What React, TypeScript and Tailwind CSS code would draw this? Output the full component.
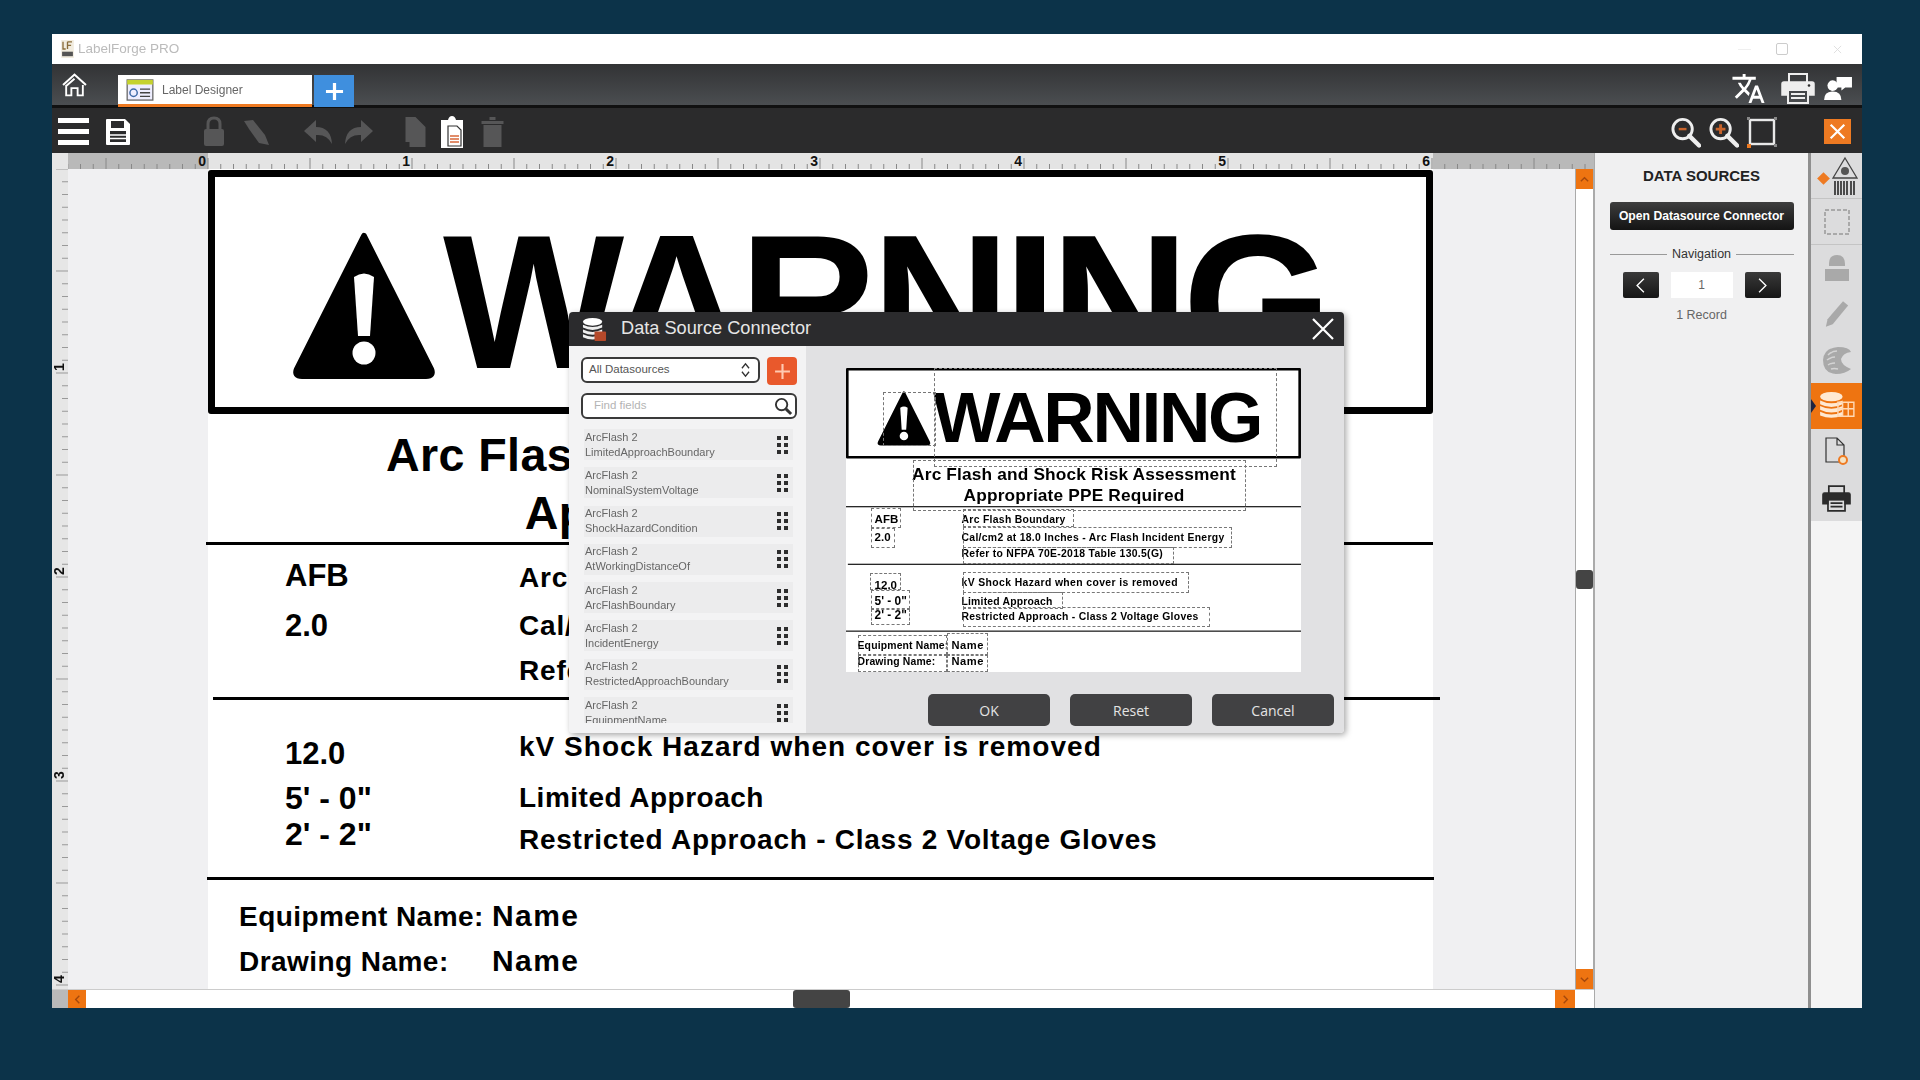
import { MdTranslate } from "react-icons/md";

const SANS = "font-['Liberation_Sans',Arial,sans-serif]";

function Triangle({ className }: { className: string }) {
  return (
    <svg viewBox="0 0 146 150" className={className}>
      <path d="M73 6 L140 139 Q143 146 135 146 L11 146 Q3 146 6 139 Z" fill="#000" stroke="#000" strokeWidth="6" strokeLinejoin="round" />
      <path d="M63 47 Q73 40 83 47 L79 106 L67 106 Z" fill="#fff" />
      <circle cx="73" cy="123" r="11.5" fill="#fff" />
    </svg>
  );
}

function Label() {
  const big = "absolute whitespace-nowrap leading-none font-bold text-black";
  return (
    <div className={`relative w-[1232px] h-[830px] ${SANS}`}>
      <div className="absolute left-0 top-0 w-[1225px] h-[244px] border-[7px] border-black rounded-[3px]" />
      <Triangle className="absolute left-[83px] top-[60px] w-[146px] h-[150px]" />
      <div className={`${big} left-[235px] top-[36px] text-[192px] tracking-[-6.5px]`}>WARNING</div>
      <div className={`${big} left-0 top-[262px] w-[1228px] text-center text-[46.6px] tracking-[0.4px]`}>Arc Flash and Shock Risk Assessment</div>
      <div className={`${big} left-0 top-[320px] w-[1228px] text-center text-[46.6px] tracking-[0.4px]`}>Appropriate PPE Required</div>
      <div className="absolute left-[-2px] top-[372px] w-[1227px] h-[3px] bg-black" />
      <div className="absolute left-[5px] top-[527px] w-[1227px] h-[3px] bg-black" />
      <div className="absolute left-[-1px] top-[707px] w-[1227px] h-[3px] bg-black" />

      <div className={`${big} left-[77px] top-[390px] text-[31px]`}>AFB</div>
      <div className={`${big} left-[77px] top-[440px] text-[31px]`}>2.0</div>
      <div className={`${big} left-[311px] top-[394px] text-[28px] tracking-[0.8px]`}>Arc Flash Boundary</div>
      <div className={`${big} left-[311px] top-[442px] text-[28px] tracking-[0.8px]`}>Cal/cm2 at 18.0 Inches - Arc Flash Incident Energy</div>
      <div className={`${big} left-[311px] top-[487px] text-[28px] tracking-[0.8px]`}>Refer to NFPA 70E-2018 Table 130.5(G)</div>

      <div className={`${big} left-[77px] top-[568px] text-[31px]`}>12.0</div>
      <div className={`${big} left-[77px] top-[612px] text-[32px]`}>5' - 0"</div>
      <div className={`${big} left-[77px] top-[648px] text-[32px]`}>2' - 2"</div>
      <div className={`${big} left-[311px] top-[563px] text-[28px] tracking-[1.03px]`}>kV Shock Hazard when cover is removed</div>
      <div className={`${big} left-[311px] top-[614px] text-[28px] tracking-[0.5px]`}>Limited Approach</div>
      <div className={`${big} left-[311px] top-[656px] text-[28px] tracking-[0.75px]`}>Restricted Approach - Class 2 Voltage Gloves</div>

      <div className={`${big} left-[31px] top-[733px] text-[28px] tracking-[0.45px]`}>Equipment Name:</div>
      <div className={`${big} left-[284px] top-[731px] text-[30px] tracking-[1.4px]`}>Name</div>
      <div className={`${big} left-[31px] top-[778px] text-[28px] tracking-[0.45px]`}>Drawing Name:</div>
      <div className={`${big} left-[284px] top-[776px] text-[30px] tracking-[1.4px]`}>Name</div>
    </div>
  );
}

const DASHES = [
  "left-[37px] top-[24px] w-[53px] h-[54px]",
  "left-[88px] top-[0px] w-[343px] h-[99px]",
  "left-[67px] top-[92px] w-[333px] h-[51px]",
  "left-[25px] top-[140px] w-[30px] h-[20px]",
  "left-[25px] top-[160px] w-[24px] h-[20px]",
  "left-[117px] top-[141px] w-[111px] h-[18px]",
  "left-[117px] top-[159px] w-[269px] h-[21px]",
  "left-[117px] top-[179px] w-[211px] h-[17px]",
  "left-[24px] top-[205px] w-[31px] h-[17px]",
  "left-[25px] top-[222px] w-[39px] h-[19px]",
  "left-[25px] top-[241px] w-[39px] h-[16px]",
  "left-[117px] top-[204px] w-[226px] h-[21px]",
  "left-[117px] top-[224px] w-[100px] h-[17px]",
  "left-[117px] top-[239px] w-[247px] h-[20px]",
  "left-[12px] top-[267px] w-[89px] h-[20px]",
  "left-[101px] top-[265px] w-[41px] h-[22px]",
  "left-[12px] top-[287px] w-[89px] h-[17px]",
  "left-[101px] top-[287px] w-[41px] h-[17px]",
];

function HRuler() {
  const ticks = Array.from({ length: 121 }, (_, i) => i);
  return (
    <svg width="1526" height="16" className="block">
      <rect width="1526" height="16" fill="#b9b9b9" />
      <rect x="140" width="1225" height="16" fill="#e4e4e4" />
      {ticks.map((i) => {
        const x = 140 + (i - 11) * 12.75;
        const major = (i - 11) % 8 === 0;
        return <line key={i} x1={x} x2={x} y1={major ? 5 : 11} y2="16" stroke="#888" strokeWidth="1" />;
      })}
      {[0, 1, 2, 3, 4, 5, 6].map((n) => (
        <text key={n} x={138 + n * 204} y="13" textAnchor="end" fontSize="14" fontWeight="700" fill="#111" fontFamily="Liberation Sans">{n}</text>
      ))}
    </svg>
  );
}

function VRuler() {
  const ticks = Array.from({ length: 66 }, (_, i) => i);
  return (
    <svg width="16" height="820" className="block">
      <rect width="16" height="820" fill="#e6e6e6" />
      {ticks.map((i) => {
        const y = i * 12.75;
        return <line key={i} x1={i % 8 === 0 ? 4 : 10} x2="16" y1={y} y2={y} stroke="#999" strokeWidth="1" />;
      })}
      {[1, 2, 3, 4].map((n) => {
        const y = n * 204 - 6;
        return <text key={n} x="8" y={y} transform={`rotate(-90 8 ${y})`} textAnchor="middle" dominantBaseline="middle" fontSize="14" fontWeight="700" fill="#111" fontFamily="Liberation Sans">{n}</text>;
      })}
    </svg>
  );
}

function Db({ className }: { className: string }) {
  return (
    <svg viewBox="0 0 26 26" className={className}>
      <ellipse cx="11" cy="5" rx="10" ry="4" fill="#fff" />
      <path d="M1 8 Q11 13 21 8 V11 Q11 16 1 11 Z" fill="#eee" />
      <path d="M1 13 Q11 18 21 13 V16 Q11 21 1 16 Z" fill="#eee" />
      <path d="M1 18 Q11 23 21 18 V21 Q11 26 1 21 Z" fill="#eee" />
      <rect x="13" y="15" width="12" height="10" rx="1" fill="#b5492a" />
    </svg>
  );
}

function Printer({ className, stroke, fill }: { className: string; stroke: string; fill: string }) {
  return (
    <svg viewBox="0 0 34 32" className={className}>
      <path d="M8 10 V2 H26 V10" fill="none" stroke={stroke} strokeWidth="2" />
      <path d="M3 10 H31 Q33 10 33 12 V23 H27 V18 H7 V23 H1 V12 Q1 10 3 10 Z" fill={fill} stroke={stroke} strokeWidth="1.5" />
      <path d="M7 18 H27 V31 H7 Z M10 22 H24 M10 26 H24" fill="none" stroke={stroke} strokeWidth="2" />
      <circle cx="28" cy="13.5" r="1.3" fill="#2b2b2b" />
    </svg>
  );
}

const FIELDS = [
  "LimitedApproachBoundary",
  "NominalSystemVoltage",
  "ShockHazardCondition",
  "AtWorkingDistanceOf",
  "ArcFlashBoundary",
  "IncidentEnergy",
  "RestrictedApproachBoundary",
  "EquipmentName",
];

function Dots() {
  return (
    <div className="grid grid-cols-2 gap-x-[3px] gap-y-[3px] w-[11px]">
      {[0, 1, 2, 3, 4, 5].map((i) => (
        <div key={i} className="w-[4px] h-[4px] bg-[#2d2d2d]" />
      ))}
    </div>
  );
}

function Dialog() {
  return (
    <div className={`absolute left-[501px] top-[143px] w-[775px] h-[421px] flex flex-col rounded-[4px] overflow-hidden shadow-[2px_2px_6px_rgba(0,0,0,0.35)] ${SANS}`}>
      <div className="h-[34px] bg-[#2b2b2d] flex items-center pl-[13px] pr-[9px] shrink-0">
        <Db className="w-[25px] h-[25px]" />
        <span className="ml-[14px] text-[18.2px] text-[#e6e6e6]">Data Source Connector</span>
        <svg viewBox="0 0 24 24" className="ml-auto w-[24px] h-[24px]">
          <path d="M2 2 L22 22 M22 2 L2 22" stroke="#fff" strokeWidth="2.2" />
        </svg>
      </div>
      <div className="flex-1 flex min-h-0">
        <div className="w-[237px] bg-[#f3f3f4] pl-[12px] pr-[9px] pt-[11px] flex flex-col">
          <div className="flex gap-[7px] h-[28px]">
            <div className="w-[180px] h-[26px] bg-white border-2 border-[#3a3a3a] rounded-[6px] flex items-center pl-[6px] pr-[7px]">
              <span className="text-[11.5px] text-[#555]">All Datasources</span>
              <svg viewBox="0 0 12 18" className="ml-auto w-[11px] h-[16px]">
                <path d="M2 7 L6 2 L10 7 M2 11 L6 16 L10 11" fill="none" stroke="#333" strokeWidth="1.5" />
              </svg>
            </div>
            <div className="w-[30px] h-[28px] bg-[#e9592c] rounded-[4px] flex items-center justify-center">
              <svg viewBox="0 0 16 16" className="w-[17px] h-[17px]"><path d="M8 1 V15 M1 8 H15" stroke="#ffc9b0" strokeWidth="2" /></svg>
            </div>
          </div>
          <div className="mt-[8px] w-[216px] h-[26px] bg-white border-2 border-[#3a3a3a] rounded-[6px] flex items-center pl-[11px] pr-[2px] shrink-0">
            <span className="text-[11.5px] text-[#b4b4b4]">Find fields</span>
            <svg viewBox="0 0 20 20" className="ml-auto w-[19px] h-[19px]">
              <circle cx="8" cy="8" r="6" fill="none" stroke="#333" strokeWidth="2" />
              <path d="M12.5 12.5 L18 18" stroke="#333" strokeWidth="3" />
            </svg>
          </div>
          <div className="mt-[10px] w-[216px] pl-[3px] h-[294px] overflow-hidden flex flex-col gap-[7.3px]">
            {FIELDS.map((f) => (
              <div key={f} className="w-[209px] h-[31px] shrink-0 bg-[#ececed] flex items-center pl-[1px] pr-[5px]">
                <div className="leading-[15px] text-[11px] text-[#666] blur-[0.3px]">
                  <div>ArcFlash 2</div>
                  <div>{f}</div>
                </div>
                <div className="ml-auto"><Dots /></div>
              </div>
            ))}
          </div>
        </div>
        <div className="flex-1 bg-[#e1e1e3] pl-[40px] pt-[22px] flex flex-col">
          <div className="relative w-[455px] h-[304px] bg-white overflow-hidden shrink-0">
            <div className="absolute left-0 top-0 origin-top-left scale-[0.3714]"><Label /></div>
            {DASHES.map((c) => (
              <div key={c} className={`absolute border border-dashed border-[#777] ${c}`} />
            ))}
          </div>
          <div className="flex gap-[20px] ml-[82px] mt-[22px] font-['Open_Sans',sans-serif]">
            {["OK", "Reset", "Cancel"].map((b) => (
              <div key={b} className="w-[122px] h-[32px] bg-[#414143] rounded-[5px] flex items-center justify-center text-[14px] text-[#e4e4e4]">{b}</div>
            ))}
          </div>
        </div>
      </div>
    </div>
  );
}

function TitleBar() {
  return (
    <div className="h-[30px] bg-white flex items-center pl-[9px] pr-[20px] shrink-0">
      <svg viewBox="0 0 14 20" className="w-[13px] h-[18px]">
        <rect width="14" height="20" fill="#f1ecdf" />
        <path d="M2 2 V10 H5 M7 2 V10 M7 2 H12 M7 6 H11" stroke="#8a6d3b" strokeWidth="1.5" fill="none" />
        <rect x="1" y="13" width="12" height="5" fill="#555" />
      </svg>
      <span className="ml-[4px] text-[13.5px] text-[#bbb] blur-[0.4px]">LabelForge PRO</span>
      <div className="ml-auto w-[13px] h-px bg-[#efefef]" />
      <div className="ml-[25px] w-[12px] h-[12px] border border-[#ccc] rounded-[2px]" />
      <svg viewBox="0 0 10 10" className="ml-[45px] w-[9px] h-[9px]"><path d="M1 1 L9 9 M9 1 L1 9" stroke="#ddd" /></svg>
    </div>
  );
}

function TabBar() {
  return (
    <div className="h-[44px] bg-gradient-to-b from-[#323335] to-[#4b4e51] border-b-[3px] border-[#111] flex items-end shrink-0 relative">
      <svg viewBox="0 0 24 24" className="absolute left-[10px] top-[8px] w-[25px] h-[26px]">
        <path d="M1 12 L12 2 L23 12" fill="none" stroke="#fff" strokeWidth="2" />
        <path d="M4 12 V22 H9 V15 H15 V22 H20 V12 M12 6 L4 13" fill="none" stroke="#fff" strokeWidth="1.8" />
      </svg>
      <div className="ml-[66px] w-[194px] h-[32px] bg-white border-b-[3px] border-[#ee7a22] flex items-center pl-[7px] mb-[-2px]">
        <svg viewBox="0 0 30 24" className="w-[30px] h-[22px]">
          <rect x="1" y="1" width="28" height="22" fill="#eef" stroke="#666" strokeWidth="1.4" />
          <rect x="1" y="1" width="28" height="5" fill="#c5d22e" />
          <circle cx="8" cy="15" r="4" fill="none" stroke="#3e6aa8" strokeWidth="1.6" />
          <path d="M15 11 H26 M15 15 H26 M15 19 H26" stroke="#444" strokeWidth="1.5" />
        </svg>
        <span className="ml-[7px] text-[12px] text-[#666]">Label Designer</span>
      </div>
      <div className="ml-[2px] w-[40px] h-[32px] bg-[#3f8fde] flex items-center justify-center mb-[-2px]">
        <svg viewBox="0 0 20 20" className="w-[19px] h-[19px]"><path d="M10 1 V19 M1 10 H19" stroke="#fff" strokeWidth="3.4" /></svg>
      </div>
      <div className="ml-auto self-center flex items-center mr-[9px] mt-[7px]">
        <MdTranslate className="w-[35px] h-[35px] text-white" />
        <Printer className="ml-[15px] w-[34px] h-[32px]" stroke="#eee" fill="#eee" />
        <svg viewBox="0 0 30 26" className="ml-[9px] w-[29px] h-[25px]">
          <path d="M13 1 H29 V12 H22 L18 15 V12 H13 Z" fill="#fff" />
          <circle cx="9" cy="10" r="5.5" fill="#fff" />
          <path d="M0 25 Q0 16 9 16 Q18 16 18 25 Z" fill="#fff" />
        </svg>
      </div>
    </div>
  );
}

function ToolBar() {
  const g = "#565657";
  return (
    <div className="h-[45px] bg-[#2b2b2c] flex items-center pl-[6px] pr-[11px] pt-[2px] shrink-0">
      <div className="w-[31px] flex flex-col gap-[6px]">
        <div className="h-[5px] bg-white" /><div className="h-[5px] bg-white" /><div className="h-[5px] bg-white" />
      </div>
      <svg viewBox="0 0 26 28" className="ml-[16px] w-[26px] h-[28px]">
        <path d="M1 2 Q1 1 2 1 H20 L25 6 V26 Q25 27 24 27 H2 Q1 27 1 26 Z" fill="#fff" />
        <rect x="6" y="3" width="13" height="7" fill="#2b2b2c" />
        <rect x="5" y="13" width="16" height="11" fill="#2b2b2c" />
        <path d="M5 17 H21 M5 20.5 H21" stroke="#fff" strokeWidth="1.5" />
      </svg>
      <svg viewBox="0 0 24 32" className="ml-[71px] w-[24px] h-[32px]">
        <path d="M6 14 V8 Q6 2 12 2 Q18 2 18 8 V14" fill="none" stroke={g} strokeWidth="3" />
        <rect x="2" y="13" width="20" height="17" rx="2" fill={g} />
      </svg>
      <svg viewBox="0 0 30 30" className="ml-[15px] w-[30px] h-[30px]">
        <path d="M3 4 L12 3 L24 18 L28 28 L18 26 L8 12 Z" fill={g} />
      </svg>
      <svg viewBox="0 0 30 26" className="ml-[32px] w-[30px] h-[26px]"><path d="M13 1 L1 12 L13 23 V16 Q24 15 29 25 Q28 8 13 8 Z" fill={g} /></svg>
      <svg viewBox="0 0 30 26" className="ml-[11px] w-[30px] h-[26px]"><path d="M17 1 L29 12 L17 23 V16 Q6 15 1 25 Q2 8 17 8 Z" fill={g} /></svg>
      <svg viewBox="0 0 24 32" className="ml-[29px] w-[25px] h-[32px]"><path d="M2 1 H12 L22 11 V31 H6 V26 H2 Z" fill={g} /></svg>
      <svg viewBox="0 0 24 34" className="ml-[12px] w-[24px] h-[34px]">
        <path d="M1 5 H8 Q9 1 12 1 Q15 1 16 5 H23 V33 H1 Z" fill="#fff" />
        <path d="M8 11 H17 L21 15 V31 H8 Z" fill="#fff" stroke="#333" strokeWidth="1.2" />
        <path d="M10 21 H19 M10 24 H19 M10 27 H19" stroke="#d8673a" strokeWidth="1.3" />
      </svg>
      <svg viewBox="0 0 24 32" className="ml-[16px] w-[25px] h-[32px]">
        <path d="M1 5 H23 V8 H1 Z M9 1 H15 V4 H9 Z M3 9 H21 V31 H3 Z" fill={g} />
      </svg>

      <div className="ml-auto flex items-center">
        <svg viewBox="0 0 32 32" className="w-[31px] h-[32px]">
          <circle cx="13" cy="13" r="10" fill="none" stroke="#eee" strokeWidth="3" />
          <path d="M20 20 L30 30" stroke="#eee" strokeWidth="4.5" strokeLinecap="round" />
          <path d="M9 13 H17" stroke="#c8632a" strokeWidth="2.5" />
        </svg>
        <svg viewBox="0 0 32 32" className="ml-[7px] w-[31px] h-[32px]">
          <circle cx="13" cy="13" r="10" fill="none" stroke="#eee" strokeWidth="3" />
          <path d="M20 20 L30 30" stroke="#eee" strokeWidth="4.5" strokeLinecap="round" />
          <path d="M8 13 H18 M13 8 V18" stroke="#c8632a" strokeWidth="3" />
        </svg>
        <svg viewBox="0 0 32 32" className="ml-[7px] w-[32px] h-[32px]">
          <rect x="4" y="4" width="24" height="24" fill="none" stroke="#e8e8e8" strokeWidth="2.4" />
          <rect x="1" y="1" width="3" height="3" fill="#888" /><rect x="28" y="1" width="3" height="3" fill="#888" />
          <rect x="1" y="28" width="4" height="4" fill="#ee7a22" /><rect x="28" y="28" width="3" height="3" fill="#888" />
        </svg>
        <div className="ml-[46px] w-[27px] h-[25px] bg-[#ee7a22] flex items-center justify-center">
          <svg viewBox="0 0 20 20" className="w-[17px] h-[17px]"><path d="M2 2 L18 18 M18 2 L2 18" stroke="#fff" strokeWidth="2.6" /></svg>
        </div>
      </div>
    </div>
  );
}

function RightPanel() {
  return (
    <div className={`w-[214px] bg-[#f0f0f1] border-l border-[#aaa] flex flex-col items-center shrink-0 ${SANS}`}>
      <div className="mt-[14px] text-[15px] font-bold text-[#222] leading-[18px]">DATA SOURCES</div>
      <div className="mt-[17px] w-[184px] h-[28px] rounded-[3px] bg-gradient-to-b from-[#3e3e3e] to-[#141414] text-white text-[12.2px] font-bold flex items-center justify-center">Open Datasource Connector</div>
      <div className="mt-[17px] w-[184px] flex items-center gap-[5px]">
        <div className="flex-1 h-px bg-[#999]" />
        <span className="text-[12.5px] text-[#333] leading-[14px]">Navigation</span>
        <div className="flex-1 h-px bg-[#999]" />
      </div>
      <div className="mt-[11px] flex items-center">
        <div className="w-[36px] h-[26px] rounded-[2px] bg-gradient-to-b from-[#3a3a3a] to-[#161616] flex items-center justify-center">
          <svg viewBox="0 0 12 20" className="w-[11px] h-[17px]"><path d="M10 2 L2 10 L10 18" fill="none" stroke="#fff" strokeWidth="1.6" /></svg>
        </div>
        <div className="mx-[12px] w-[62px] h-[26px] bg-white text-[12px] text-[#666] flex items-center justify-center">1</div>
        <div className="w-[36px] h-[26px] rounded-[2px] bg-gradient-to-b from-[#3a3a3a] to-[#161616] flex items-center justify-center">
          <svg viewBox="0 0 12 20" className="w-[11px] h-[17px]"><path d="M2 2 L10 10 L2 18" fill="none" stroke="#fff" strokeWidth="1.6" /></svg>
        </div>
      </div>
      <div className="mt-[10px] text-[12.5px] text-[#666] leading-[14px]">1 Record</div>
    </div>
  );
}

function Rail() {
  const g = "#a9a9a9";
  const row = "h-[46px] flex items-center justify-center";
  return (
    <div className="w-[54px] bg-[#f4f4f4] border-l-[3px] border-[#8f8f8f] shrink-0">
      <div className="bg-[#dcdcdd]">
        <div className={`${row} border-b border-[#c4c4c4] relative`}>
          <div className="absolute left-[8px] top-[21px] w-[9px] h-[9px] rotate-45 bg-[#ee7a22]" />
          <svg viewBox="0 0 26 40" className="ml-[16px] w-[26px] h-[40px]">
            <path d="M13 2 L25 22 H1 Z" fill="none" stroke="#444" strokeWidth="1.3" />
            <circle cx="13" cy="15" r="4" fill="#555" />
            <path d="M3 25 V39 M6 25 V39 M9 25 V39 M12 25 V39 M15 25 V39 M19 25 V39 M22 25 V39" stroke="#333" strokeWidth="1.7" />
          </svg>
        </div>
        <div className={`${row} border-b border-[#c4c4c4]`}>
          <svg viewBox="0 0 28 28" className="w-[28px] h-[28px]"><rect x="2" y="2" width="24" height="24" fill="none" stroke={g} strokeWidth="2" strokeDasharray="4 2" /></svg>
        </div>
        <div className={row}>
          <svg viewBox="0 0 26 28" className="w-[26px] h-[28px]"><path d="M5 10 Q5 1 13 1 Q21 1 21 10 V12 H5 Z" fill={g} /><rect x="1" y="15" width="24" height="12" fill={g} /></svg>
        </div>
        <div className={row}>
          <svg viewBox="0 0 28 32" className="w-[24px] h-[30px]"><path d="M21 1 L27 6 L9 28 L1 31 L3 22 Z" fill={g} /></svg>
        </div>
        <div className={row}>
          <svg viewBox="0 0 30 30" className="w-[30px] h-[30px]">
            <path d="M16 2 Q27 2 29 7 Q21 8 19 14 Q19 20 29 24 Q23 29 14 29 Q1 28 1 15 Q2 3 16 2 Z" fill={g} />
            <path d="M6 10 Q10 6 15 6 M5 15 Q9 12 13 12 M6 20 Q9 18 13 18 M9 24 Q12 23 16 24" fill="none" stroke="#d4d4d4" strokeWidth="1.5" />
          </svg>
        </div>
        <div className={`${row} bg-[#ee7411] relative`}>
          <div className="absolute left-0 top-[16px] border-y-[7px] border-y-transparent border-l-[5px] border-l-[#1c2340]" />
          <svg viewBox="0 0 40 32" className="w-[40px] h-[30px]">
            <ellipse cx="14" cy="6" rx="12" ry="5" fill="#ffe9d2" />
            <path d="M2 10 Q14 16 26 10 V14 Q14 20 2 14 Z M2 16 Q14 22 26 16 V20 Q14 26 2 20 Z M2 22 Q14 28 26 22 V26 Q14 31 2 26 Z" fill="#ffe9d2" />
            <path d="M21 12 H38 V27 H21 Z M26 12 V27 M32 12 V27 M21 19 H38" fill="none" stroke="#ffd9b5" strokeWidth="1.5" />
          </svg>
        </div>
        <div className={row}>
          <svg viewBox="0 0 28 30" className="w-[28px] h-[30px]">
            <path d="M3 1 H14 L21 8 V25 H3 Z M14 1 V8 H21" fill="none" stroke="#333" strokeWidth="1.2" />
            <circle cx="20" cy="23" r="4" fill="#f4e3c4" stroke="#ee7a22" strokeWidth="2" />
          </svg>
        </div>
        <div className={row}>
          <Printer className="w-[29px] h-[30px]" stroke="#2b2b2b" fill="#2b2b2b" />
        </div>
      </div>
    </div>
  );
}

function ScrollBtn({ d, className }: { d: string; className: string }) {
  return (
    <div className={`bg-[#ee7411] flex items-center justify-center shrink-0 ${className}`}>
      <svg viewBox="0 0 12 12" className="w-[11px] h-[11px]"><path d={d} fill="none" stroke="#a5480c" strokeWidth="1.5" /></svg>
    </div>
  );
}

export default function App() {
  return (
    <div className={`w-[1920px] h-[1080px] bg-[#0c3349] pt-[34px] pl-[52px] overflow-hidden ${SANS}`}>
      <div className="w-[1810px] h-[974px] flex flex-col blur-[0.4px]">
        <TitleBar />
        <TabBar />
        <ToolBar />
        <div className="flex-1 flex min-h-0">
          <div className="w-[1542px] flex flex-col shrink-0">
            <div className="h-[16px] flex shrink-0">
              <div className="w-[16px] bg-[#e6e6e6]" />
              <HRuler />
            </div>
            <div className="h-[820px] flex shrink-0">
              <VRuler />
              <div className="relative flex-1 bg-[#f0f0f2] overflow-hidden">
                <div className="absolute left-[140px] top-0 w-[1225px] h-[820px] bg-white" />
                <div className="absolute left-[140px] top-[1px]"><Label /></div>
                <Dialog />
              </div>
              <div className="w-[19px] bg-white border-x border-[#aaa] flex flex-col shrink-0">
                <ScrollBtn d="M2 8 L6 4 L10 8" className="h-[20px]" />
                <div className="h-[381px]" />
                <div className="h-[19px] bg-[#444] rounded-[3px]" />
                <div className="flex-1" />
                <ScrollBtn d="M2 4 L6 8 L10 4" className="h-[20px]" />
              </div>
            </div>
            <div className="h-[19px] flex bg-white border-t border-[#ccc] shrink-0">
              <div className="w-[16px] bg-[#b9b9b9]" />
              <ScrollBtn d="M8 2 L4 6 L8 10" className="w-[18px]" />
              <div className="w-[707px]" />
              <div className="w-[57px] bg-[#444] rounded-[3px]" />
              <div className="flex-1" />
              <ScrollBtn d="M4 2 L8 6 L4 10" className="w-[20px]" />
              <div className="w-[19px]" />
            </div>
          </div>
          <RightPanel />
          <Rail />
        </div>
      </div>
    </div>
  );
}
